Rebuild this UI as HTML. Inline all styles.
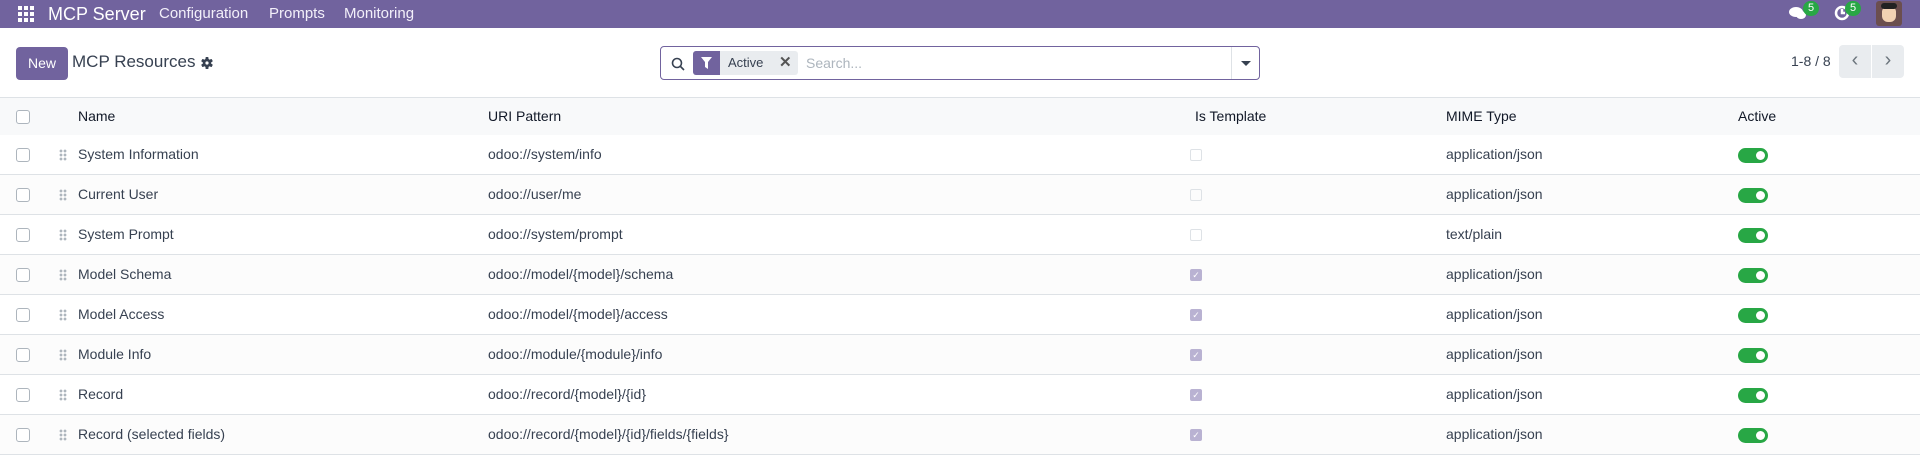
<!DOCTYPE html>
<html><head><meta charset="utf-8"><style>
*{box-sizing:border-box;margin:0;padding:0}
body{width:1920px;height:455px;overflow:hidden;background:#fff;font-family:"Liberation Sans",sans-serif;font-size:14px;color:#374151;position:relative}
.nav{position:absolute;left:0;top:0;width:1920px;height:28px;background:#71639e;color:#fff}
.nav span{position:absolute;top:0;line-height:28px;font-size:15px;color:#f3f0fa}
.abs{position:absolute}
.cb{position:absolute;width:14px;height:14px;border:1px solid #adb5bd;border-radius:3px;background:#fff}
table{position:absolute;left:0;top:97px;width:1920px;border-collapse:collapse}
tr{height:40px;border-bottom:1px solid #dee2e6}
tr.h{background:#f8f9fa;border-top:1px solid #dee2e6;height:38px;color:#111827;font-weight:500}
td{position:relative;padding:0;white-space:nowrap}
.tg{position:absolute;left:1738px;width:30px;height:15px;border-radius:8px;background:#28a745}
.tg:after{content:"";position:absolute;right:3px;top:3px;width:9px;height:9px;border-radius:50%;background:#fff}
.dh{position:absolute;left:59px;width:8px;height:12px;background:radial-gradient(circle,#adb5bd 1.3px,transparent 1.5px) 0 0/4px 4px}
</style></head><body>
<div class="nav">
<svg class="abs" style="left:18px;top:6px" width="16" height="16" viewBox="0 0 16 16" fill="#fff"><rect x="0" y="0" width="4" height="4"/><rect x="6" y="0" width="4" height="4"/><rect x="12" y="0" width="4" height="4"/><rect x="0" y="6" width="4" height="4"/><rect x="6" y="6" width="4" height="4"/><rect x="12" y="6" width="4" height="4"/><rect x="0" y="12" width="4" height="4"/><rect x="6" y="12" width="4" height="4"/><rect x="12" y="12" width="4" height="4"/></svg>
<span style="left:48px;font-size:18px;color:#fff">MCP Server</span>
<span style="left:159px">Configuration</span>
<span style="left:269px">Prompts</span>
<span style="left:344px">Monitoring</span>
<svg class="abs" style="left:1789px;top:6px" width="18" height="14" viewBox="0 0 18 14" fill="#fff"><ellipse cx="7" cy="6" rx="7" ry="5"/><ellipse cx="12" cy="9" rx="5" ry="4"/></svg>
<div class="abs" style="left:1803px;top:1px;width:16px;height:15px;border-radius:8px;background:#28a745;font-size:11px;text-align:center;line-height:15px">5</div>
<svg class="abs" style="left:1834px;top:5px" width="16" height="16" viewBox="0 0 16 16" fill="none" stroke="#fff" stroke-width="2.5"><circle cx="8" cy="8" r="6"/><path d="M8 4v4h3"/></svg>
<div class="abs" style="left:1845px;top:1px;width:16px;height:15px;border-radius:8px;background:#28a745;font-size:11px;text-align:center;line-height:15px">5</div>
<div class="abs" style="left:1876px;top:1px;width:26px;height:25px;border-radius:3px;background:#6b4e4e"><div class="abs" style="left:6px;top:5px;width:14px;height:16px;border-radius:6px;background:#f2d1b3"></div><div class="abs" style="left:5px;top:2px;width:16px;height:6px;border-radius:4px;background:#222"></div></div>
</div>
<div class="abs" style="left:16px;top:47px;width:52px;height:33px;background:#71639e;border-radius:4px;color:#fff;text-align:center;line-height:33px;font-weight:500">New</div>
<div class="abs" style="left:72px;top:52px;font-size:17px;color:#374151">MCP Resources</div>
<svg class="abs" style="left:201px;top:57px" width="12" height="12" viewBox="0 0 12 12"><g fill="#374151"><rect x="4.5" y="0" width="3" height="12" rx="0.8"/><rect x="4.5" y="0" width="3" height="12" rx="0.8" transform="rotate(60 6 6)"/><rect x="4.5" y="0" width="3" height="12" rx="0.8" transform="rotate(120 6 6)"/><circle cx="6" cy="6" r="4.2"/></g><circle cx="6" cy="6" r="1.6" fill="#fff"/></svg>
<div class="abs" style="left:660px;top:46px;width:600px;height:34px;border:1px solid #71639e;border-radius:4px">
<svg class="abs" style="left:10px;top:10px" width="14" height="14" viewBox="0 0 14 14" fill="none" stroke="#374151" stroke-width="1.6"><circle cx="6" cy="6" r="4.5"/><path d="M9.5 9.5l3.5 3.5"/></svg>
<div class="abs" style="left:32px;top:4px;width:105px;height:24px;background:#e9ecef;border-radius:3px"><div class="abs" style="left:0;top:0;width:27px;height:24px;background:#71639e;border-radius:3px 0 0 3px"><svg class="abs" style="left:8px;top:6px" width="11" height="12" viewBox="0 0 11 12" fill="#fff"><path d="M0 0h11L7 5v7L4 10V5z"/></svg></div><span class="abs" style="left:35px;top:4px;font-size:13px">Active</span><span class="abs" style="left:86px;top:2px;font-size:15px;font-weight:bold;color:#555">✕</span></div>
<span class="abs" style="left:145px;top:8px;color:#adb5bd">Search...</span>
<div class="abs" style="left:570px;top:0;width:1px;height:32px;background:#dee2e6"></div>
<div class="abs" style="left:580px;top:14px;border-left:5px solid transparent;border-right:5px solid transparent;border-top:5px solid #374151"></div>
</div>
<div class="abs" style="left:1791px;top:53px;color:#374151">1-8 / 8</div>
<div class="abs" style="left:1839px;top:45px;width:32px;height:33px;background:#e9ecef;border-radius:4px 0 0 4px;color:#6c757d;font-size:20px;text-align:center;line-height:30px">‹</div>
<div class="abs" style="left:1872px;top:45px;width:32px;height:33px;background:#e9ecef;border-radius:0 4px 4px 0;color:#6c757d;font-size:20px;text-align:center;line-height:30px">›</div>
<table>
<tr class="h"><td style="width:1920px"><div class="cb" style="left:16px;top:12px"></div><span class="abs" style="left:78px;top:10px">Name</span><span class="abs" style="left:488px;top:10px">URI Pattern</span><span class="abs" style="left:1195px;top:10px">Is Template</span><span class="abs" style="left:1446px;top:10px">MIME Type</span><span class="abs" style="left:1738px;top:10px">Active</span></td></tr>
</table>
<div id="rows"></div>
<script>
var d=[["System Information","odoo://system/info",0,"application/json"],["Current User","odoo://user/me",0,"application/json"],["System Prompt","odoo://system/prompt",0,"text/plain"],["Model Schema","odoo://model/{model}/schema",1,"application/json"],["Model Access","odoo://model/{model}/access",1,"application/json"],["Module Info","odoo://module/{module}/info",1,"application/json"],["Record","odoo://record/{model}/{id}",1,"application/json"],["Record (selected fields)","odoo://record/{model}/{id}/fields/{fields}",1,"application/json"]];
var h="";
d.forEach(function(r,i){var t=135+i*40;
h+='<div class="abs" style="left:0;top:'+t+'px;width:1920px;height:40px;border-bottom:1px solid #dee2e6;background:'+(i%2?'#fcfcfc':'#fff')+'">'+
'<div class="cb" style="left:16px;top:13px"></div><div class="dh" style="top:14px"></div>'+
'<span class="abs" style="left:78px;top:11px">'+r[0]+'</span><span class="abs" style="left:488px;top:11px">'+r[1]+'</span>'+
(r[2]?'<div class="abs" style="left:1190px;top:14px;width:12px;height:12px;border-radius:2px;background:#b9b2d2;color:#fff;font-size:9px;text-align:center;line-height:12px">✓</div>':'<div class="abs" style="left:1190px;top:14px;width:12px;height:12px;border-radius:2px;border:1px solid #dee2e6"></div>')+
'<span class="abs" style="left:1446px;top:11px">'+r[3]+'</span><div class="tg" style="top:13px"></div></div>';});
document.getElementById("rows").innerHTML=h;
</script>
</body></html>
